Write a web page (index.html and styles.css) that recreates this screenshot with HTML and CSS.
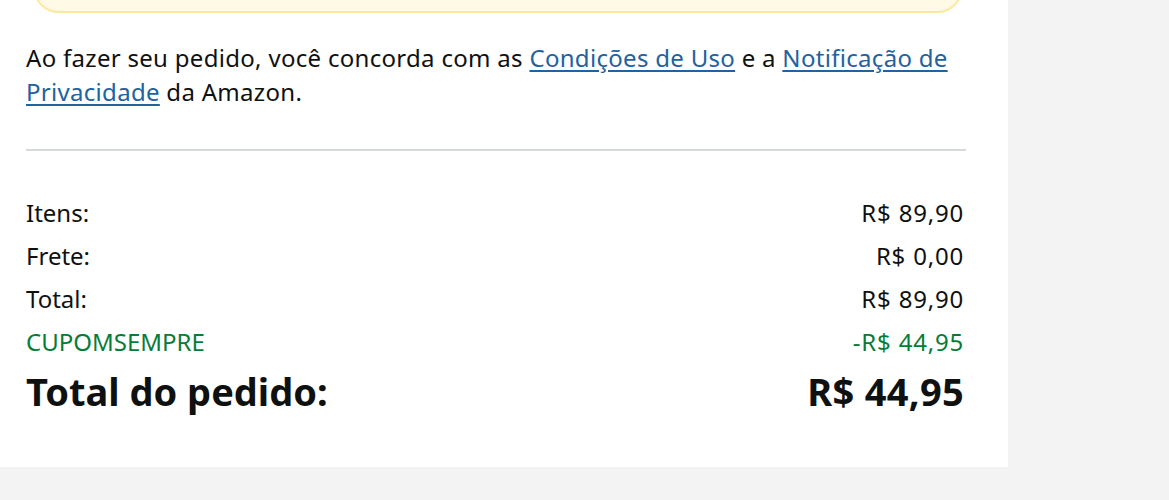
FILE: index.html
```html
<!DOCTYPE html>
<html lang="pt-BR">
<head>
<meta charset="utf-8">
<title>Resumo do pedido</title>
<link rel="stylesheet" href="styles.css">
</head>
<body>
<div class="panel">
	<div class="notice"></div>
	<p class="terms">Ao fazer seu pedido, você concorda com as <a href="#">Condições de Uso</a> e a <a href="#">Notificação de Privacidade</a> da Amazon.</p>
	<hr class="divider">
	<table class="summary">
		<tr><td>Itens:</td><td class="num">R$ 89,90</td></tr>
		<tr><td>Frete:</td><td class="num">R$ 0,00</td></tr>
		<tr><td>Total:</td><td class="num">R$ 89,90</td></tr>
		<tr class="promo"><td>CUPOMSEMPRE</td><td class="num">-R$ 44,95</td></tr>
		<tr class="grand"><td>Total do pedido:</td><td class="num">R$ 44,95</td></tr>
	</table>
</div>
</body>
</html>
```

FILE: styles.css
```css
* {
	font-family: "Noto Sans", Arial, sans-serif;
}
body {
	margin: 0;
	background-color: #f3f3f3;
	color: #0f1111;
}
.panel {
	width: 938px;
	background-color: #fff;
	padding: 0 44px 48px 26px;
	overflow: hidden;
}
.notice {
	height: 60px;
	margin: -51px 1px 0 7px;
	background-color: #fffae5;
	border: 2px solid #fce9a0;
	border-radius: 26px;
}
.terms {
	margin: 28px 0 0;
	font-size: 24px;
	line-height: 34px;
	letter-spacing: 0.3px;
}
.terms a {
	color: #2162a1;
	text-decoration: underline;
	text-decoration-thickness: 2px;
	text-underline-offset: 3px;
}
.divider {
	margin: 40px -2px 0 0;
	border: 0;
	border-top: 2px solid #d5d9d9;
}
.summary {
	width: 100%;
	margin-top: 40px;
	border-collapse: collapse;
}
.summary td {
	padding: 0;
	font-size: 24px;
	line-height: 43px;
}
.summary .num {
	text-align: right;
	letter-spacing: 0.8px;
}
.promo td {
	color: #067d36;
}
.grand td {
	font-size: 38px;
	font-weight: bold;
	line-height: 56px;
	letter-spacing: 0;
}
.grand .num {
	letter-spacing: 0.3px;
}
```
